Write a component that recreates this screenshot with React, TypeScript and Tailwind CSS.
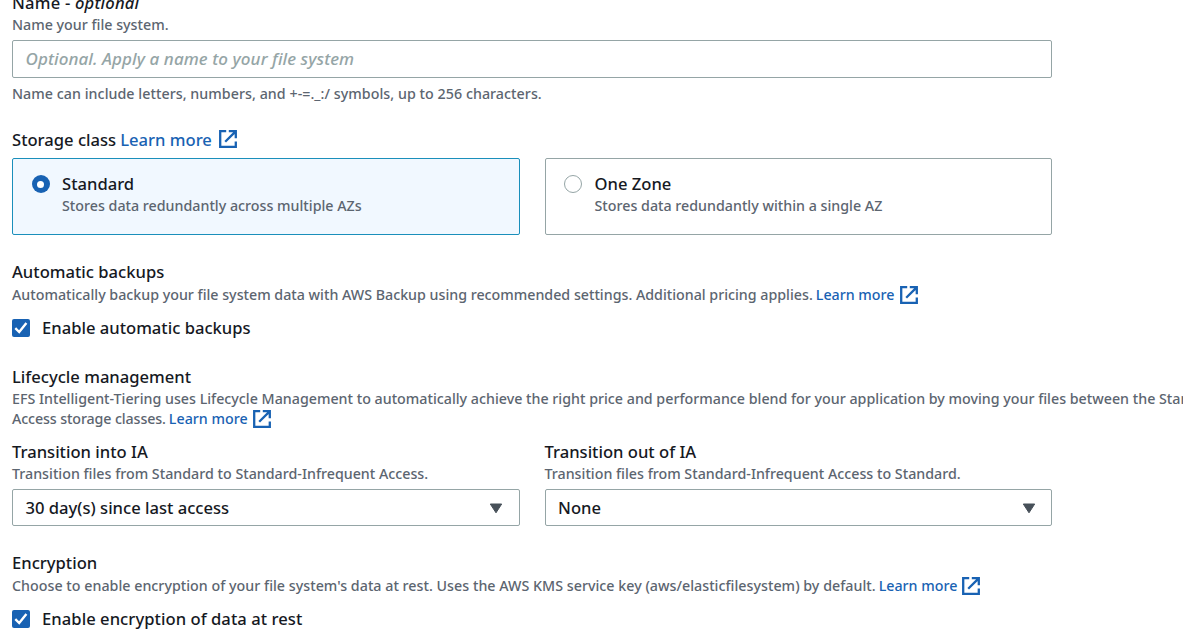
import type { ReactNode } from "react";

function ExternalIcon({ className }: { className: string }) {
  return (
    <svg viewBox="0 0 18 18" fill="none" stroke="currentColor" strokeWidth="2.3" className={`size-[18px] shrink-0 ${className}`}>
      <path d="M7.2 1.2H1.2v15.6h15.6v-5.3" />
      <path d="M9.8 1.2h7v7M16.4 1.6 6.2 11.8" />
    </svg>
  );
}

function LearnMore({ large = false, className = "" }: { large?: boolean; className?: string }) {
  return (
    <a href="#" className={`flex items-center text-[#1862b3] ${large ? "ml-[4px]" : "ml-[3px]"} ${className}`}>
      <span>Learn more</span>
      <ExternalIcon className={large ? "mb-[2px] ml-[7px]" : "ml-[5px]"} />
    </a>
  );
}

function Title({ children, className = "" }: { children: ReactNode; className?: string }) {
  return <div className={`flex h-[22px] items-center whitespace-pre text-[16.6px] leading-[22px] text-[#16191f] ${className}`}>{children}</div>;
}

function Desc({ children, className = "" }: { children: ReactNode; className?: string }) {
  return <div className={`flex h-5 items-center whitespace-pre text-[14.25px] leading-5 text-[#5c6570] ${className}`}>{children}</div>;
}

function Radio({ checked }: { checked: boolean }) {
  return (
    <span
      className={
        checked
          ? "flex size-[18px] shrink-0 items-center justify-center rounded-full bg-[#1862b3]"
          : "block size-[18px] shrink-0 rounded-full border border-[#95a5a6] bg-white"
      }
    >
      {checked && <span className="block size-[7px] rounded-full bg-white" />}
    </span>
  );
}

function Tile({ title, text, checked = false }: { title: string; text: string; checked?: boolean }) {
  return (
    <div
      className={`flex h-[77px] flex-1 rounded-[2px] border pt-[14px] pl-[18.5px] ${
        checked ? "border-[#1a8fbb] bg-[#f1f8ff]" : "border-[#95a5a6] bg-white"
      }`}
    >
      <div className="pt-[2px]">
        <Radio checked={checked} />
      </div>
      <div className="pl-[12.5px]">
        <Title>{title}</Title>
        <Desc className="mt-px">{text}</Desc>
      </div>
    </div>
  );
}

function Check({ label, className = "" }: { label: string; className?: string }) {
  return (
    <div className="flex h-[22px] items-center">
      <span className="flex size-[18px] items-center justify-center rounded-[2px] bg-[#1862b3]">
        <svg viewBox="0 0 18 18" fill="none" stroke="white" strokeWidth="2.4" className="size-[18px]">
          <path d="M3.3 9.2 7.2 13 14.4 4" />
        </svg>
      </span>
      <Title className={`ml-3 ${className}`}>{label}</Title>
    </div>
  );
}

function Select({ value }: { value: string }) {
  return (
    <div className="flex h-[37px] items-center justify-between rounded-[2px] border border-[#95a5a6] bg-white pr-[15.5px] pl-[12.5px]">
      <Title>{value}</Title>
      <svg viewBox="0 0 14 11" className="mt-[2px] h-[11px] w-[14px]">
        <path d="M1.3 1h11.4L7 9.8z" fill="#475059" stroke="#475059" strokeWidth="1" strokeLinejoin="round" />
      </svg>
    </div>
  );
}

export default function App() {
  return (
    <main className="h-[636px] w-full overflow-hidden bg-white pl-3 font-['Noto_Sans',sans-serif] font-medium">
      <section className="-mt-2 w-[1040px]">
        <Title className="tracking-[0.2px]">
          Name - <i>optional</i>
        </Title>
        <Desc className="mt-px">Name your file system.</Desc>
        <div className="mt-[5px] flex h-[38px] items-center rounded-[2px] border border-[#95a5a6] bg-white pl-[12.5px]">
          <span className="text-[17px] leading-[22px] tracking-[0.08px] text-[#95a5a6] italic">Optional. Apply a name to your file system</span>
        </div>
        <Desc className="mt-[6px] tracking-[0.04px]">Name can include letters, numbers, and +-=._:/ symbols, up to 256 characters.</Desc>
      </section>

      <section className="mt-[25px] w-[1040px]">
        <Title>
          Storage class
          <LearnMore large />
        </Title>
        <div className="mt-[7px] flex gap-[25px]">
          <Tile title="Standard" text="Stores data redundantly across multiple AZs" checked />
          <Tile title="One Zone" text="Stores data redundantly within a single AZ" />
        </div>
      </section>

      <section className="mt-[26px]">
        <Title>Automatic backups</Title>
        <Desc className="mt-[2px]">
          <span className="tracking-[-0.008px]">
            Automatically backup your file system data with AWS Backup using recommended settings. Additional pricing applies.
          </span>
          <LearnMore />
        </Desc>
        <div className="mt-3">
          <Check label="Enable automatic backups" />
        </div>
      </section>

      <section className="mt-[27px]">
        <Title>Lifecycle management</Title>
        <Desc className="mt-px">
          EFS Intelligent-Tiering uses Lifecycle Management to automatically achieve the right price and performance blend for your application by moving your files between the Standard and Standard-Infrequent
        </Desc>
        <Desc>
          <span className="tracking-[-0.12px]">Access storage classes.</span>
          <LearnMore />
        </Desc>
        <div className="mt-3 grid w-[1040px] grid-cols-2 gap-x-[25px]">
          <div>
            <Title>Transition into IA</Title>
            <Desc className="mt-px">Transition files from Standard to Standard-Infrequent Access.</Desc>
            <div className="mt-[5px]">
              <Select value="30 day(s) since last access" />
            </div>
          </div>
          <div>
            <Title>Transition out of IA</Title>
            <Desc className="mt-px">Transition files from Standard-Infrequent Access to Standard.</Desc>
            <div className="mt-[5px]">
              <Select value="None" />
            </div>
          </div>
        </div>
      </section>

      <section className="mt-[26px]">
        <Title>Encryption</Title>
        <Desc className="mt-[2px]">
          <span className="tracking-[0.016px]">
            Choose to enable encryption of your file system's data at rest. Uses the AWS KMS service key (aws/elasticfilesystem) by default.
          </span>
          <LearnMore />
        </Desc>
        <div className="mt-3">
          <Check label="Enable encryption of data at rest" className="tracking-[0.05px]" />
        </div>
      </section>
    </main>
  );
}
